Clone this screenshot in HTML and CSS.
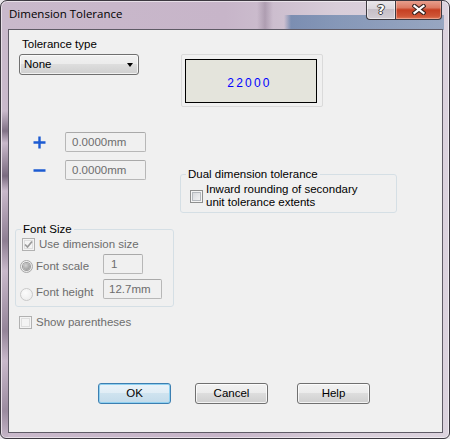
FILE: index.html
```html
<!DOCTYPE html>
<html>
<head>
<meta charset="utf-8">
<link rel="stylesheet" href="styles.css">
</head>
<body>
<div class="window">
  <div class="titlebar">
    <span class="title">Dimension Tolerance</span>
    <div class="caption-btns">
      <div class="cbtn help"><span class="qmark">?</span></div>
      <div class="cbtn close">
        <svg width="14" height="11" viewBox="0 0 14 11"><path d="M2.5 2 L11.5 9 M11.5 2 L2.5 9" stroke="#3b2520" stroke-width="4.4" stroke-linecap="square" fill="none"/><path d="M2.5 2 L11.5 9 M11.5 2 L2.5 9" stroke="#ffffff" stroke-width="2.2" stroke-linecap="square" fill="none"/></svg>
      </div>
    </div>
  </div>
  <div class="client">
    <div class="sec-top">
      <div class="tol-type">
        <div class="lbl">Tolerance type</div>
        <div class="combo"><span>None</span><span class="arrow"></span></div>
      </div>
      <div class="preview"><div class="preview-inner">22000</div></div>
    </div>

    <div class="sec-mid">
      <div class="pm">
        <div class="pm-row">
          <svg class="sign" width="13" height="13" viewBox="0 0 13 13"><path d="M0.5 6.5 H12.5 M6.5 0.5 V12.5" stroke="#1c5bd2" stroke-width="2.4" fill="none"/></svg>
          <div class="tb dis w81">0.0000mm</div>
        </div>
        <div class="pm-row">
          <svg class="sign" width="13" height="13" viewBox="0 0 13 13"><path d="M0.5 6.5 H12.5" stroke="#1c5bd2" stroke-width="2.4" fill="none"/></svg>
          <div class="tb dis w81">0.0000mm</div>
        </div>
      </div>
      <fieldset class="grp dual">
        <legend>Dual dimension tolerance</legend>
        <div class="dual-row">
          <span class="cb"></span>
          <span class="dual-text">Inward rounding of secondary<br>unit tolerance extents</span>
        </div>
      </fieldset>
    </div>

    <fieldset class="grp fontsize">
      <legend>Font Size</legend>
      <div class="fs-row1">
        <span class="cb cb-dis">
          <svg width="11" height="11" viewBox="0 0 11 11"><path d="M2 5.5 L4.5 8 L9 2.5" stroke="#9a9a9a" stroke-width="1.7" fill="none"/></svg>
        </span>
        <span class="dis-text">Use dimension size</span>
      </div>
      <div class="fs-row2">
        <span class="radio radio-on"><span class="dot"></span></span>
        <span class="fs-label dis-text">Font scale</span>
        <div class="tb dis w40 pad7">1</div>
      </div>
      <div class="fs-row3">
        <span class="radio radio-off"></span>
        <span class="fs-label dis-text">Font height</span>
        <div class="tb dis w59 pad5">12.7mm</div>
      </div>
    </fieldset>

    <div class="paren-row">
      <span class="cb cb-dis"></span>
      <span class="dis-text">Show parentheses</span>
    </div>

    <div class="buttons">
      <div class="btn btn-default">OK</div>
      <div class="btn btn-cancel">Cancel</div>
      <div class="btn btn-help">Help</div>
    </div>
  </div>
</div>
</body>
</html>
```

FILE: styles.css
```css
html, body {
  margin: 0;
  padding: 0;
  background: #e9e6ea;
}

.window {
  width: 450px;
  height: 439px;
  box-sizing: border-box;
  border: 1px solid #3c3840;
  border-radius: 7px 7px 6px 6px;
  padding: 0 6px 5px 7px;
  display: flex;
  flex-direction: column;
  overflow: hidden;
  box-shadow: inset 0 0 0 1px rgba(255, 255, 255, 0.55);
  background:
    linear-gradient(to right, rgba(72, 110, 158, 0) 0, rgba(72, 110, 158, 0.62) 7px, rgba(96, 130, 170, 0.55) 100%) no-repeat 283px 14px / 160px 15px,
    linear-gradient(to right, rgba(120, 100, 124, 0), rgba(120, 100, 124, 0.35), rgba(120, 100, 124, 0)) no-repeat 256px 0 / 16px 29px,
    linear-gradient(to bottom, rgba(0,0,0,0) 0, rgba(0,0,0,0) 110px, rgba(70,55,78,0.55) 130px, rgba(0,0,0,0) 142px, rgba(70,55,78,0.6) 175px, rgba(0,0,0,0) 190px, rgba(70,55,78,0.45) 240px, rgba(0,0,0,0) 270px, rgba(70,55,78,0.4) 330px, rgba(0,0,0,0) 360px, rgba(70,55,78,0.35) 410px, rgba(0,0,0,0) 439px) no-repeat 1px 0 / 6px 100%,
    linear-gradient(to right, #c9b9cb 0%, #c7b5c9 50%, #cdbfcf 62%, #d8cdd9 75%, #dcd3de 100%);
}

/* ---------- title bar ---------- */
.titlebar {
  height: 28px;
  flex: none;
  display: flex;
  align-items: flex-start;
  box-sizing: border-box;
  padding: 5px 0 0 1px;
}

.title {
  font-family: "Open Sans", "Noto Sans", sans-serif;
  font-size: 11.5px;
  line-height: 16px;
  color: #000;
}

.caption-btns {
  margin-left: auto;
  margin-top: -6px;
  margin-right: 1px;
  display: flex;
}

.cbtn {
  height: 20px;
  box-sizing: border-box;
  border: 1px solid #3d3a40;
  border-top: none;
  display: flex;
  align-items: center;
  justify-content: center;
}

.help {
  width: 29px;
  border-right: none;
  border-radius: 0 0 0 4px;
  background: linear-gradient(to bottom, #ebe8ec 0%, #dcd7dd 45%, #c6bfc7 50%, #d3cdd4 100%);
  box-shadow: inset 0 0 0 1px rgba(255, 255, 255, 0.5);
}

.qmark {
  font-family: "DejaVu Sans", sans-serif;
  font-weight: bold;
  font-size: 13px;
  line-height: 14px;
  color: #fff;
  text-shadow: 1px 0 0 #3a3a3a, -1px 0 0 #3a3a3a, 0 1px 0 #3a3a3a, 0 -1px 0 #3a3a3a;
}

.close {
  width: 47px;
  border-radius: 0 0 4px 0;
  background: linear-gradient(to bottom, #e9a493 0%, #dc7b64 40%, #c63f22 52%, #cf5536 85%, #e07a58 100%);
  box-shadow: inset 0 0 0 1px rgba(255, 210, 200, 0.45);
}

/* ---------- client area ---------- */
.client {
  flex: 1;
  box-sizing: border-box;
  border: 1px solid #5f5b66;
  background: #f0f0f0;
  display: flex;
  flex-direction: column;
  padding-bottom: 28px;
  font-family: "Liberation Sans", Arial, sans-serif;
  font-size: 11.5px;
  line-height: 13px;
  color: #000;
}

.sec-top {
  display: flex;
  align-items: flex-start;
  padding-top: 8px;
}

.tol-type {
  margin-left: 10px;
}

.lbl {
  padding-left: 3px;
  margin-bottom: 3px;
}

.combo {
  width: 120px;
  height: 21px;
  box-sizing: border-box;
  border: 1px solid #707070;
  border-radius: 3px;
  display: flex;
  align-items: center;
  padding: 0 5px 0 4px;
  background: linear-gradient(to bottom, #f2f2f2 0%, #ebebeb 50%, #dddddd 50%, #cfcfcf 100%);
  box-shadow: inset 0 0 0 1px rgba(255, 255, 255, 0.7);
}

.arrow {
  margin-left: auto;
  width: 0;
  height: 0;
  border-top: 4px solid #000;
  border-left: 3.5px solid transparent;
  border-right: 3.5px solid transparent;
}

.preview {
  margin-left: 42px;
  margin-top: 16px;
  width: 142px;
  height: 53px;
  box-sizing: border-box;
  border: 1px solid #dadada;
  border-radius: 2px;
  padding: 4px 5px 3px 3px;
}

.preview-inner {
  height: 44px;
  box-sizing: border-box;
  border: 1px solid #000;
  background: #e4e4dc;
  display: flex;
  align-items: center;
  justify-content: center;
  padding-top: 4px;
  padding-right: 3px;
  font-family: "Liberation Sans", Arial, sans-serif;
  font-size: 12px;
  letter-spacing: 2.2px;
  color: #0000ff;
}

/* ---------- plus / minus + dual ---------- */
.sec-mid {
  display: flex;
  align-items: flex-start;
  margin-top: 25px;
}

.pm {
  margin-left: 24px;
  display: flex;
  flex-direction: column;
  gap: 8px;
}

.pm-row {
  display: flex;
  align-items: center;
}

.sign {
  display: block;
  margin-right: 19px;
}

.tb {
  height: 20px;
  box-sizing: border-box;
  border: 1px solid #b7b7b7;
  border-top-color: #a9a9a9;
  border-radius: 2px;
  background: #f0f0f0;
  display: flex;
  align-items: center;
  padding-left: 6px;
}

.tb.dis {
  color: #6d6d6d;
}

.w81 { width: 81px; }
.w40 { width: 40px; }
.w59 { width: 59px; }
.pad7 { padding-left: 7px; }
.pad5 { padding-left: 5px; }

.grp {
  margin: 0;
  padding: 0;
  border: 1px solid #d5dfe5;
  border-radius: 3px;
  min-width: 0;
}

.grp legend {
  margin-left: 5px;
  padding: 0 2px;
  line-height: 13px;
}

.dual {
  margin-left: 34px;
  margin-top: 36px;
  width: 217px;
  box-sizing: border-box;
  padding: 2px 0 3px 0;
}

.dual-row {
  display: flex;
  align-items: center;
  padding-left: 9px;
}

.dual-text {
  margin-left: 3px;
}

/* checkbox */
.cb {
  width: 13px;
  height: 13px;
  flex: none;
  box-sizing: border-box;
  border: 1px solid #8e8f8f;
  background: linear-gradient(135deg, #cfd2d6 0%, #e9eaec 60%, #f6f6f6 100%);
  box-shadow: inset 0 0 0 1px #f4f4f4, inset 0 0 0 2px #b5b9be;
  display: flex;
  align-items: center;
  justify-content: center;
}

.cb-dis {
  border-color: #b1b1b1;
  background: #f4f4f4;
  box-shadow: inset 0 0 0 1px #f4f4f4, inset 0 0 0 2px #dedede;
}

.cb svg {
  display: block;
}

.dis-text {
  color: #6d6d6d;
}

/* font size group */
.fontsize {
  margin-left: 6px;
  margin-top: 10px;
  width: 159px;
  box-sizing: border-box;
  padding: 0 0 5px 0;
}

.fs-row1 {
  display: flex;
  align-items: center;
  margin-top: 2px;
  padding-left: 6px;
}

.fs-row1 .dis-text {
  margin-left: 4px;
}

.fs-row2, .fs-row3 {
  display: flex;
  align-items: flex-start;
  padding-left: 4px;
}

.fs-row2 { margin-top: 3px; }
.fs-row3 { margin-top: 5px; }

.radio {
  width: 13px;
  height: 13px;
  flex: none;
  box-sizing: border-box;
  border-radius: 50%;
  display: flex;
  align-items: center;
  justify-content: center;
}

.radio-on {
  margin-top: 6px;
  border: 1px solid #a9a9a9;
  background: radial-gradient(circle at 40% 35%, #fbfbfb, #e2e2e2);
}

.radio-on .dot {
  width: 7px;
  height: 7px;
  border-radius: 50%;
  background: radial-gradient(circle at 40% 35%, #d2d2d2, #8a8a8a);
  box-shadow: 0 0 0 1px #9c9c9c;
}

.radio-off {
  margin-top: 9px;
  border: 1px solid #c9c9c9;
  background: radial-gradient(circle at 40% 35%, #fbfbfb, #e9e9e9);
}

.fs-label {
  width: 67px;
  margin-left: 3px;
}

.fs-row2 .fs-label { margin-top: 6px; }
.fs-row3 .fs-label { margin-top: 7px; }

.paren-row {
  display: flex;
  align-items: center;
  margin-top: 9px;
  margin-left: 10px;
}

.paren-row .dis-text {
  margin-left: 4px;
}

/* buttons */
.buttons {
  margin-top: auto;
  display: flex;
}

.btn {
  width: 73px;
  height: 21px;
  box-sizing: border-box;
  border: 1px solid #707070;
  border-radius: 3px;
  display: flex;
  align-items: center;
  justify-content: center;
  background: linear-gradient(to bottom, #f2f2f2 0%, #ebebeb 50%, #dddddd 50%, #cfcfcf 100%);
  box-shadow: inset 0 0 0 1px rgba(255, 255, 255, 0.75);
}

.btn-default {
  margin-left: 89px;
  border-color: #3c7fb1;
  background: linear-gradient(to bottom, #eaf3f9 0%, #e0edf5 50%, #cfe3ef 50%, #c3dbea 100%);
  box-shadow: inset 0 0 0 1px #8fd0f0;
}

.btn-cancel { margin-left: 24px; }
.btn-help { margin-left: 29px; }
```
